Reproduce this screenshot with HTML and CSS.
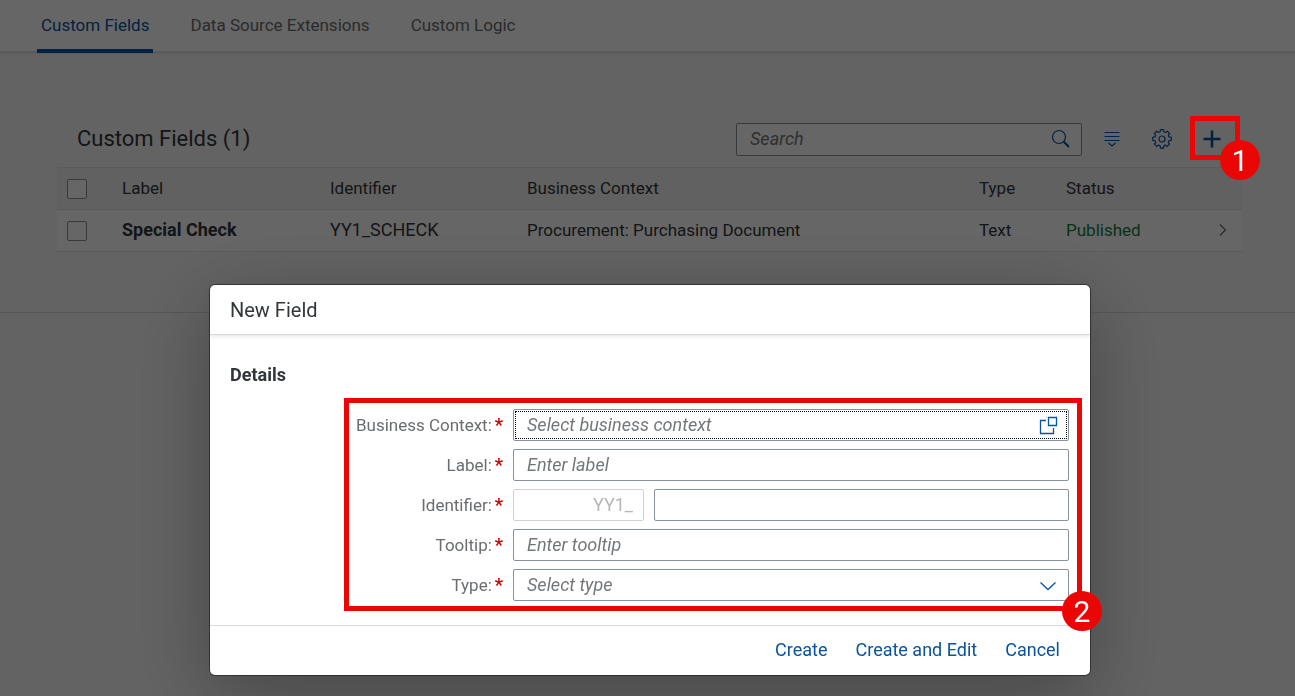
FILE: index.html
```html
<!DOCTYPE html>
<html lang="en">
<head>
<meta charset="utf-8">
<meta name="viewport" content="width=device-width, initial-scale=1">
<title>Custom Fields</title>
<link rel="stylesheet" href="styles.css">
</head>
<body>
<nav class="tabs" aria-label="Sections">
  <a class="tab tab-active" href="#fields">Custom Fields</a>
  <a class="tab" href="#sources">Data Source Extensions</a>
  <a class="tab" href="#logic">Custom Logic</a>
</nav>

<main class="content" id="fields">
  <div class="toolbar">
    <h1 class="toolbar-title">Custom Fields (1)</h1>
    <div class="search">
      <input class="search-input" type="search" placeholder="Search" aria-label="Search">
      <button class="search-button" type="button" aria-label="Search">
        <svg width="20" height="20" viewBox="0 0 20 20" fill="none" stroke="currentColor"><circle cx="8" cy="8" r="6.5" stroke-width="1.2"/><path d="M12.8 12.8 18 18" stroke-width="2.2"/></svg>
      </button>
    </div>
    <button class="icon-button" type="button" aria-label="Sort and group">
      <svg width="20" height="20" viewBox="0 0 20 20" fill="none" stroke="currentColor" stroke-width="1.2"><path d="M2.500 3.500h15M2.500 7.500h15M2.500 11.500h15M6.500 14l3.500 3 3.500-3"/></svg>
    </button>
    <button class="icon-button" type="button" aria-label="Settings">
      <svg width="20" height="20" viewBox="0 0 20 20" fill="none" stroke="currentColor" stroke-width="1.2" stroke-linejoin="round"><path d="M8.500 .7h3l.4 2.100 1.600.7 1.800-1.300 2.300 2.300-1.300 1.800.7 1.600 2.300.4v3l-2.300.4-.7 1.600 1.300 1.800-2.300 2.300-1.800-1.300-1.600.7-.4 2.300h-3l-.4-2.300-1.600-.7-1.800 1.300-2.300-2.300 1.300-1.800-.7-1.600-2.300-.4v-3l2.300-.4.7-1.600-1.300-1.800 2.300-2.300 1.800 1.300 1.600-.7z"/><circle cx="10" cy="10" r="3"/></svg>
    </button>
    <button class="icon-button" type="button" aria-label="Add">
      <svg width="20" height="20" viewBox="0 0 20 20" fill="none" stroke="currentColor" stroke-width="2.600"><path d="M1.500 10h17M10 1.500v17"/></svg>
    </button>
  </div>

  <table class="fields-table">
    <thead>
      <tr>
        <th class="col-check"><input class="check" type="checkbox" aria-label="Select all"></th>
        <th class="col-label">Label</th>
        <th class="col-identifier">Identifier</th>
        <th class="col-context">Business Context</th>
        <th class="col-type">Type</th>
        <th class="col-status">Status</th>
        <th class="col-nav"></th>
      </tr>
    </thead>
    <tbody>
      <tr>
        <td class="col-check"><input class="check" type="checkbox" aria-label="Select Special Check"></td>
        <td class="key strong">Special Check</td>
        <td class="key">YY1_SCHECK</td>
        <td>Procurement: Purchasing Document</td>
        <td>Text</td>
        <td class="published">Published</td>
        <td class="col-nav"><svg width="8" height="14" viewBox="0 0 8 14" fill="none" stroke="currentColor" stroke-width="1.200"><path d="M1 1.500 6.500 7 1 12.500"/></svg></td>
      </tr>
    </tbody>
  </table>
</main>

<div class="overlay">
  <div class="callout callout-add"><span class="badge">1</span></div>

  <form class="dialog" role="dialog" aria-labelledby="dialog-title">
    <header class="dialog-header"><h2 class="dialog-title" id="dialog-title">New Field</h2></header>
    <div class="dialog-body">
      <h3 class="group-title">Details</h3>
      <div class="form">
        <label class="form-label" for="context">Business Context:<span class="required">*</span></label>
        <div class="field field-focus">
          <input class="field-input" id="context" type="text" placeholder="Select business context">
          <button class="field-button" type="button" aria-label="Choose business context">
            <svg width="20" height="20" viewBox="0 0 20 20" fill="none" stroke="currentColor" stroke-width="1.300"><path d="M8 5.500H2.500v13h13V13"/><path d="M10.500 2.500h8v8h-8z"/></svg>
          </button>
        </div>

        <label class="form-label" for="label">Label:<span class="required">*</span></label>
        <div class="field"><input class="field-input" id="label" type="text" placeholder="Enter label"></div>

        <label class="form-label" for="identifier">Identifier:<span class="required">*</span></label>
        <div class="field-pair">
          <div class="field field-disabled"><input class="field-input prefix" type="text" value="YY1_" aria-label="Identifier prefix" disabled></div>
          <div class="field"><input class="field-input" id="identifier" type="text"></div>
        </div>

        <label class="form-label" for="tooltip">Tooltip:<span class="required">*</span></label>
        <div class="field"><input class="field-input" id="tooltip" type="text" placeholder="Enter tooltip"></div>

        <label class="form-label" for="type">Type:<span class="required">*</span></label>
        <div class="field">
          <select class="field-input field-select" id="type"><option>Select type</option></select>
          <svg class="field-arrow" width="20" height="20" viewBox="0 0 20 20" fill="none" stroke="currentColor" stroke-width="1.300"><path d="M2.500 6.500 10 13.500l7.500-7"/></svg>
        </div>
        <div class="callout callout-form"><span class="badge">2</span></div>
      </div>
    </div>
    <footer class="dialog-footer">
      <button class="text-button" type="button">Create</button>
      <button class="text-button" type="button">Create and Edit</button>
      <button class="text-button" type="button">Cancel</button>
    </footer>
  </form>
</div>
</body>
</html>
```

FILE: styles.css
```css
* {
  box-sizing: border-box;
}

body {
  margin: 0;
  min-height: 100vh;
  background: #f7f7f7;
  color: #32363a;
  font-family: Roboto, "Liberation Sans", sans-serif;
  font-size: 17px;
  line-height: 24px;
}

button,
input,
select {
  margin: 0;
  padding: 0;
  border: 0;
  background: none;
  color: inherit;
  font: inherit;
  font-size: 18px;
}

h1,
h2,
h3 {
  margin: 0;
  font-weight: 400;
}

svg {
  display: block;
}

/* Section tabs */
.tabs {
  display: flex;
  gap: 33px;
  height: 52px;
  padding-left: 37px;
  border-bottom: 1px solid #e0e0e0;
  background: #fff;
  box-shadow: 0 1px 3px rgba(0, 0, 0, 0.12);
}

.tab {
  height: 53px;
  padding: 13px 4px 0;
  border-bottom: 4px solid transparent;
  color: #6a6d70;
  text-decoration: none;
}

.tab-active {
  border-bottom-color: #0854a0;
  border-radius: 2px 2px 0 0;
  color: #0854a0;
}

/* List of custom fields */
.content {
  padding: 59px 53px 60px 57px;
  border-bottom: 1px solid #d9d9d9;
}

.toolbar {
  display: flex;
  align-items: center;
  gap: 10px;
  height: 56px;
  padding: 0 10px 0 20px;
}

.toolbar-title {
  margin-right: auto;
  font-size: 22px;
  line-height: 28px;
}

.search {
  display: flex;
  width: 346px;
  height: 33px;
  border: 1px solid #89919a;
  border-radius: 2px;
  background: #fff;
}

.search-input {
  flex: 1;
  min-width: 0;
  padding-left: 13px;
}

.search-input::placeholder,
.field-input::placeholder {
  color: #74777a;
  font-style: italic;
  opacity: 1;
}

.search-button,
.icon-button,
.field-button {
  display: flex;
  align-items: center;
  justify-content: center;
  width: 40px;
  color: #0854a0;
}

.icon-button {
  height: 32px;
}

.fields-table {
  width: 100%;
  border-collapse: collapse;
  table-layout: fixed;
  border-top: 1px solid #e4e4e4;
}

.fields-table th,
.fields-table td {
  height: 42px;
  padding: 0 8px 2px;
  border-bottom: 1px solid #e4e4e4;
  text-align: left;
  font-weight: 400;
  white-space: nowrap;
}

.fields-table th {
  background: #f2f2f2;
}

.fields-table td {
  background: #fff;
}

.fields-table .key {
  font-size: 18px;
}

.fields-table .strong {
  font-weight: 700;
}

.fields-table .published {
  color: #107e3e;
}

.fields-table .col-check {
  width: 57px;
  padding: 0 0 0 10px;
}

.col-label {
  width: 208px;
}

.col-identifier {
  width: 197px;
}

.col-type {
  width: 87px;
}

.col-status {
  width: 146px;
}

.fields-table .col-nav {
  width: 38px;
  padding-left: 15px;
  color: #6a6d70;
}

.check {
  appearance: none;
  display: block;
  width: 20px;
  height: 20px;
  border: 1px solid #89919a;
  border-radius: 2px;
  background: #fff;
}

/* Modal layer */
.overlay {
  position: fixed;
  inset: 0;
  padding: 285px 10px 21px 15px;
  background: rgba(0, 0, 0, 0.6);
}

.dialog {
  max-width: 880px;
  margin: 0 auto;
  border-radius: 5px;
  background: #fff;
  box-shadow: 0 0 0 1px rgba(0, 0, 0, 0.42), 0 20px 80px rgba(0, 0, 0, 0.3);
}

.dialog-header {
  padding: 13px 20px 12px;
  border-bottom: 1px solid #d9d9d9;
  box-shadow: 0 1px 4px rgba(0, 0, 0, 0.12);
}

.dialog-title {
  font-size: 20px;
}

.dialog-body {
  padding: 28px 21px 24px 20px;
}

.group-title {
  margin-bottom: 22px;
  font-size: 18px;
  font-weight: 700;
}

.form {
  position: relative;
  display: grid;
  grid-template-columns: 273px 1fr;
  gap: 8px 10px;
}

.form-label {
  display: flex;
  align-items: center;
  justify-content: flex-end;
  gap: 3px;
  color: #6a6d70;
}

.required {
  color: #c00;
  font-size: 18px;
  font-weight: 700;
}

.field {
  position: relative;
  display: flex;
  height: 32px;
  border: 1px solid #89919a;
  border-radius: 2px;
  background: #fff;
}

.field-focus {
  outline: 1px dotted #000;
  outline-offset: -3px;
}

.field-input {
  flex: 1;
  min-width: 0;
  padding-left: 13px;
}

.field-pair {
  display: grid;
  grid-template-columns: 131px 1fr;
  gap: 10px;
}

.field-disabled {
  border-color: #cfd2d6;
}

.prefix {
  padding: 0 10px;
  color: #b4b6b8;
  text-align: right;
}

.field-select {
  appearance: none;
  color: #74777a;
  font-style: italic;
}

.field-arrow {
  position: absolute;
  top: 6px;
  right: 10px;
  color: #0854a0;
  pointer-events: none;
}

.dialog-footer {
  display: flex;
  justify-content: flex-end;
  gap: 28px;
  padding: 12px 30px 13px;
  border-top: 1px solid #d9d9d9;
}

.text-button {
  color: #0854a0;
}

/* Numbered step markers */
.callout {
  position: absolute;
  border: 5px solid #eb0606;
  pointer-events: none;
}

.callout-add {
  top: 116px;
  right: 55px;
  width: 50px;
  height: 44px;
}

.callout-form {
  inset: -11px -13px -10px 114px;
}

.badge {
  position: absolute;
  right: -25px;
  bottom: -25px;
  width: 40px;
  height: 40px;
  border-radius: 50%;
  background: #eb0606;
  color: #fff;
  font-size: 30px;
  line-height: 42px;
  text-align: center;
}
```
